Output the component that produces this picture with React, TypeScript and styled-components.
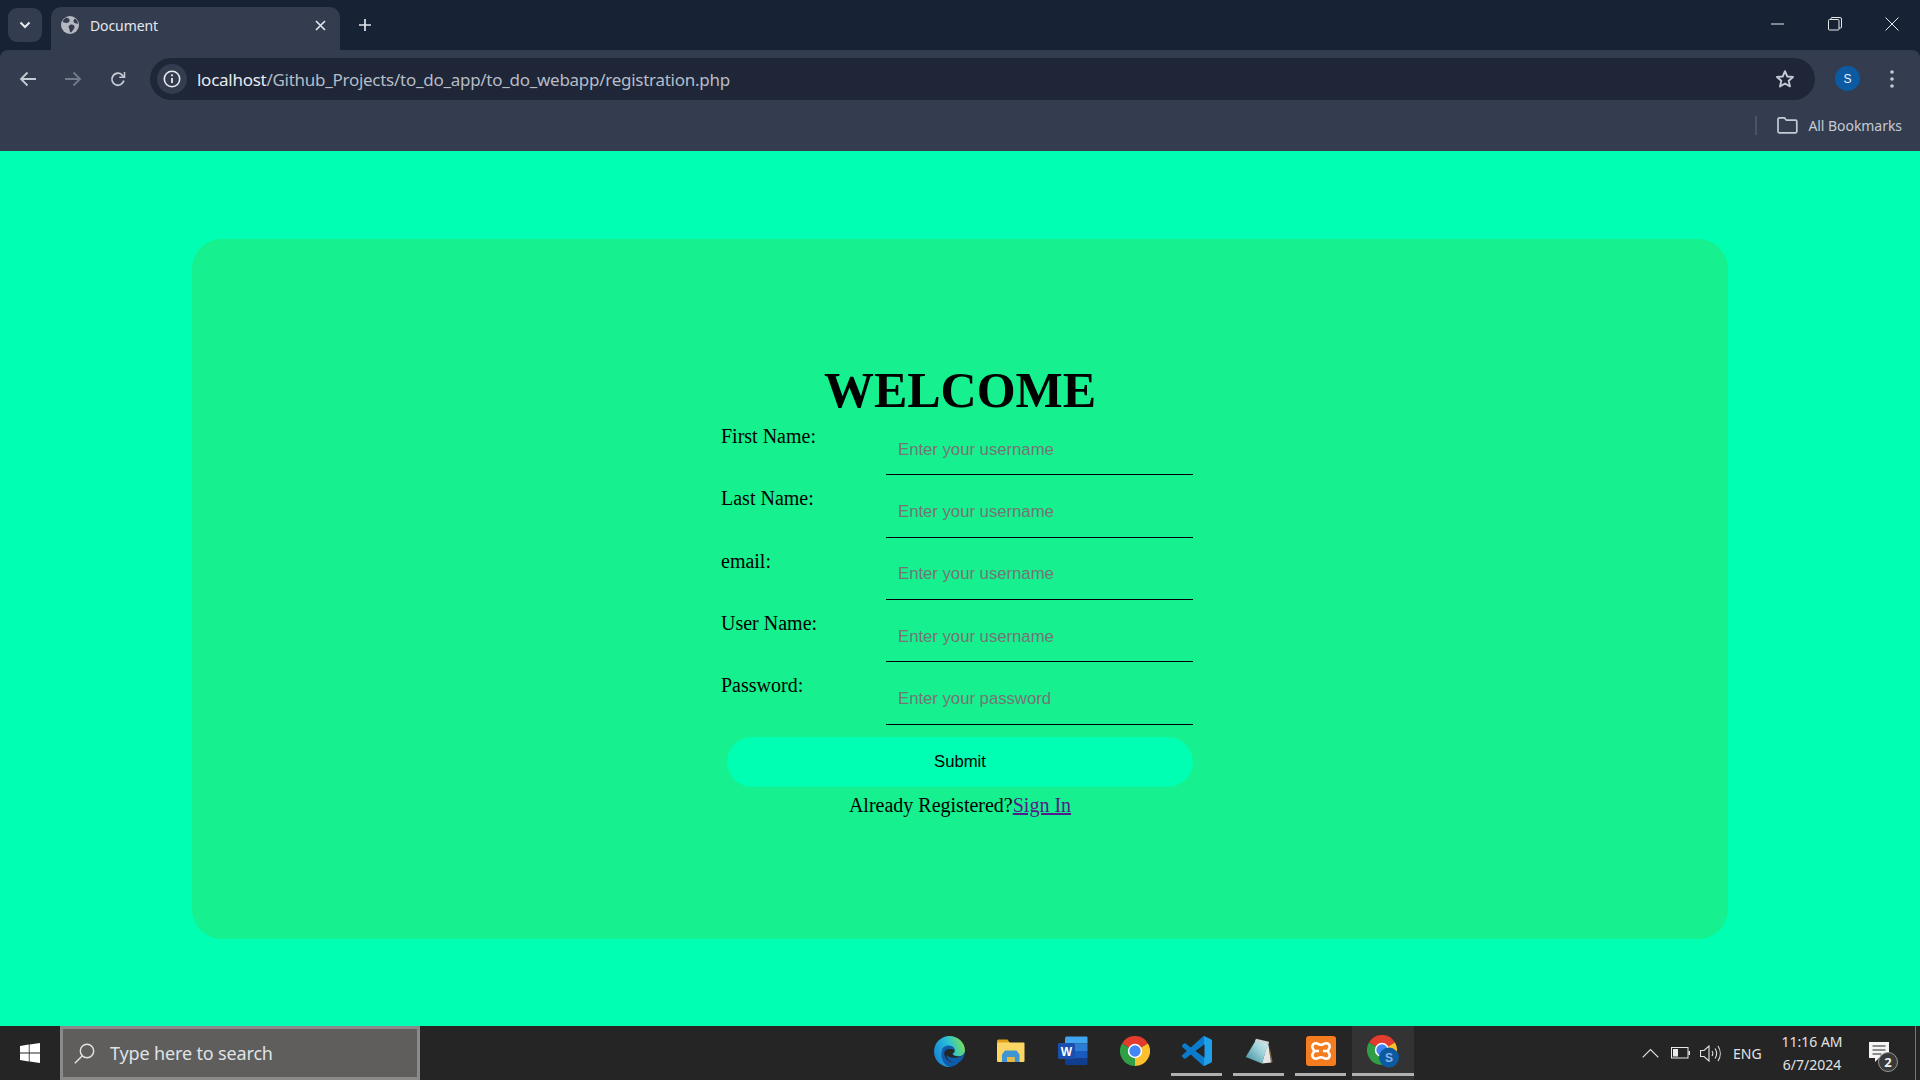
import React from 'react';
import styled, {createGlobalStyle} from 'styled-components';

const GlobalStyle = createGlobalStyle`
	html, body { margin:0; padding:0; height:100%; overflow:hidden; }
	#root { height:100%; }
	* { box-sizing:border-box; }
`;

const Screen = styled.div`
	width:1920px;
	height:1080px;
	display:flex;
	flex-flow:column;
	background:#182235;
	font-family:"Liberation Serif", serif;
`;

// browser chrome
const TitleBar = styled.div`
	height:50px;
	background:#182235;
	display:flex;
	align-items:flex-start;
	font-family:"Open Sans", sans-serif;
	color:#e4e7ec;
`;
const TabListButton = styled.div`
	width:34px;
	height:34px;
	margin:8px 9px 0 8px;
	border-radius:9px;
	background:#343d4f;
	display:flex;
	align-items:center;
	justify-content:center;
`;
const Tab = styled.div`
	width:289px;
	height:43px;
	margin-top:7px;
	background:#343d4f;
	border-radius:10px 10px 0 0;
	display:flex;
	align-items:center;
	padding:0 14px 7px 10px;
	font-size:14px;
	letter-spacing:-0.1px;
`;
const TabTitle = styled.span`
	margin-left:11px;
	flex:1;
	font-family:"Noto Sans", sans-serif;
`;
const NewTab = styled.div`
	width:30px;
	height:30px;
	margin:10px 0 0 10px;
	display:flex;
	align-items:center;
	justify-content:center;
`;
const WindowButtons = styled.div`
	margin-left:auto;
	display:flex;
`;
const WindowButton = styled.div`
	width:57px;
	height:48px;
	display:flex;
	align-items:center;
	justify-content:center;
`;
const ToolBar = styled.div`
	height:50px;
	background:#343d4f;
	display:flex;
	align-items:flex-start;
	padding-top:8px;
	border-radius:8px 8px 0 0;
`;
const NavButton = styled.div`
	width:45px;
	height:42px;
	display:flex;
	align-items:center;
	justify-content:center;
`;
const NavGroup = styled.div`
	display:flex;
	width:150px;
	padding-left:5px;
`;
const AddressBar = styled.div`
	width:1665px;
	height:42px;
	border-radius:21px;
	background:#1e2637;
	display:flex;
	align-items:center;
	padding:0 20px 0 7px;
`;
const InfoChip = styled.div`
	width:30px;
	height:30px;
	border-radius:50%;
	background:#343d4f;
	display:flex;
	align-items:center;
	justify-content:center;
`;
const Url = styled.div`
	margin-left:10px;
	flex:1;
	font-family:"Noto Sans", sans-serif;
	font-size:17px;
	letter-spacing:-0.27px;
	color:#b6bcc8;
	b { font-weight:400; color:#e8eaef; }
`;
const Avatar = styled.div`
	width:25px;
	height:25px;
	margin:8px 0 0 20px;
	border-radius:50%;
	background:#0b5aa2;
	color:#e8f0fa;
	font-family:"Liberation Sans", sans-serif;
	font-size:12px;
	display:flex;
	align-items:center;
	justify-content:center;
`;
const Kebab = styled.div`
	margin-left:30px;
	display:flex;
	height:42px;
	align-items:center;
`;
const BookmarkBar = styled.div`
	height:51px;
	background:#343d4f;
	display:flex;
	align-items:center;
	justify-content:flex-end;
	padding:0 18px 0 0;
	font-family:"Noto Sans", sans-serif;
	font-size:14px;
	letter-spacing:-0.05px;
	color:#c5cad4;
`;
const BookmarkDivider = styled.div`
	width:2px;
	height:19px;
	background:#4a5364;
	margin-right:20px;
`;
const BookmarkLabel = styled.span`
	margin-left:10px;
`;

// page
const Page = styled.main`
	flex:1;
	background:#00ffb2;
	display:flex;
	align-items:center;
	justify-content:center;
`;
const Card = styled.section`
	width:1536px;
	height:700px;
	border-radius:30px;
	background:#17f08e;
	display:flex;
	flex-flow:column;
	align-items:center;
	padding-top:128.4px;
`;
const Title = styled.h1`
	margin:0;
	font-size:50px;
	line-height:46px;
	font-weight:700;
	color:#000;
`;
const Form = styled.form`
	width:480px;
	display:flex;
	flex-flow:column;
`;
const Row = styled.div`
	height:62.4px;
	display:grid;
	grid-template-columns:165px 307px;
	padding-left:1px;
`;
const Label = styled.label`
	font-size:20px;
	line-height:23px;
	padding-top:12px;
	color:#000;
`;
const Input = styled.input`
	display:block;
	width:307px;
	height:50.4px;
	margin-top:12px;
	padding:0 12px;
	border:none;
	border-bottom:1px solid #000;
	background:transparent;
	outline:none;
	font-family:"Liberation Sans", sans-serif;
	font-size:16.7px;
	&::placeholder { color:#757575; opacity:1; }
`;
const Submit = styled.button`
	width:466px;
	height:50px;
	margin:12.1px auto 0;
	border:none;
	border-radius:25px;
	background:#00ffb2;
	color:#000;
	font-family:"Liberation Sans", sans-serif;
	font-size:16.7px;
`;
const Already = styled.p`
	margin:7px 0 0;
	font-size:20px;
	line-height:23px;
	text-align:center;
	color:#000;
	a { color:#551a8b; text-decoration:underline; }
`;

// taskbar
const TaskBar = styled.footer`
	height:54px;
	background:#252525;
	display:flex;
	color:#e6e6e6;
	font-family:"Open Sans", sans-serif;
`;
const StartButton = styled.div`
	width:60px;
	display:flex;
	align-items:center;
	justify-content:center;
`;
const SearchBox = styled.div`
	width:360px;
	background:#5f5e5c;
	border:3px solid #8a8a8a;
	display:flex;
	align-items:center;
	padding-left:11px;
	color:#dfe3e6;
`;
const SearchText = styled.span`
	margin-left:15px;
	font-family:"Noto Sans", sans-serif;
	font-size:18px;
	letter-spacing:-0.15px;
`;
const TaskList = styled.div`
	margin-left:498px;
	display:flex;
`;
const TaskSlot = styled.div<{$running?:boolean; $active?:boolean}>`
	width:62px;
	height:54px;
	display:flex;
	align-items:center;
	justify-content:center;
	padding-bottom:4px;
	position:relative;
	background:${p => p.$active ? '#333333' : 'transparent'};
	&::after {
		content:"";
		display:${p => p.$running ? 'block' : 'none'};
		position:absolute;
		bottom:4px;
		left:${p => p.$active ? '0' : '5px'};
		right:${p => p.$active ? '0' : '6px'};
		height:3px;
		background:#b0b0b0;
	}
`;
const Tray = styled.div`
	margin-left:auto;
	display:flex;
	align-items:center;
	font-size:14px;
	font-family:"Noto Sans", sans-serif;
	color:#e2e2e2;
`;
const TrayIcon = styled.div`
	width:30px;
	display:flex;
	justify-content:center;
`;
const TrayLang = styled.span`
	margin:0 0 0 8px;
	width:30px;
`;
const Clock = styled.div`
	width:90px;
	margin-left:4px;
	text-align:center;
	line-height:23px;
`;
const Notify = styled.div`
	width:49px;
	height:54px;
	margin:0 4px 0 10px;
	padding:0 0 3px 2px;
	border-right:1px solid #777;
	display:flex;
	align-items:center;
	position:relative;
`;
const NotifyBadge = styled.span`
	position:absolute;
	left:11px;
	top:26px;
	width:20px;
	height:20px;
	border-radius:50%;
	background:#3a3a3a;
	border:1px solid #999;
	color:#f0f0f0;
	font-size:13px;
	font-weight:700;
	line-height:18px;
	text-align:center;
`;

// icons
const Globe = () => (
	<svg width="18" height="18" viewBox="0 0 18 18">
		<circle cx="9" cy="9" r="9" fill="#b4b8c0"/>
		<path d="M5 1.500c2 .5 4 1 3.500 3.500S4.500 7 3 6.500 .800 5 5 1.500zM9 9c2-1 4 0 4.500 1.500S12 14 10.500 16 8.500 13 8 12s-1-2 1-3zM14 2.500c1.500 1 3 3.500 3 5-1 .5-3 0-4-1s-.5-3 1-4z" fill="#343d4f"/>
	</svg>
);
const Chevron = () => (
	<svg width="12" height="8" viewBox="0 0 12 8"><path d="M1.500 1.500 6 6l4.500-4.500" fill="none" stroke="#e6e9ee" strokeWidth="2"/></svg>
);
const Cross = () => (
	<svg width="11" height="11" viewBox="0 0 11 11"><path d="M1 1l9 9M10 1l-9 9" stroke="#dfe3ea" strokeWidth="1.700"/></svg>
);
const Plus = () => (
	<svg width="14" height="14" viewBox="0 0 14 14"><path d="M7 1v12M1 7h12" stroke="#dfe3ea" strokeWidth="1.700"/></svg>
);
const Minimize = () => (
	<svg width="14" height="2" viewBox="0 0 14 2"><path d="M0 1h13" stroke="#e8e8e8" strokeWidth="1"/></svg>
);
const Restore = () => (
	<svg width="14" height="14" viewBox="0 0 14 14" fill="none" stroke="#e8e8e8" strokeWidth="1"><rect x=".5" y="2.500" width="10.500" height="10.500" rx="1"/><path d="M3 2.500V1.500a1 1 0 0 1 1-1h8a1.500 1.500 0 0 1 1.500 1.500v8a1 1 0 0 1-1 1H11"/></svg>
);
const CloseWin = () => (
	<svg width="14" height="14" viewBox="0 0 14 14"><path d="M.5.500l13 13M13.500.500l-13 13" stroke="#e8e8e8" strokeWidth="1"/></svg>
);
const Back = ({color}:{color:string}) => (
	<svg width="18" height="16" viewBox="0 0 18 16" fill="none" stroke={color} strokeWidth="1.800"><path d="M17 8H2.500M8.500 1.500 2 8l6.500 6.500"/></svg>
);
const Forward = ({color}:{color:string}) => (
	<svg width="18" height="16" viewBox="0 0 18 16" fill="none" stroke={color} strokeWidth="1.800"><path d="M1 8h14.500M9.500 1.500 16 8l-6.500 6.500"/></svg>
);
const Reload = () => (
	<svg width="16" height="16" viewBox="0 0 16 16" fill="none" stroke="#c5cad4" strokeWidth="1.800"><path d="M13.800 9.500A6 6 0 1 1 12 3.800L14 6"/><path d="M14.500 1v5.200H9.300" strokeWidth="1.500"/></svg>
);
const Info = () => (
	<svg width="18" height="18" viewBox="0 0 18 18" fill="none"><circle cx="9" cy="9" r="7.700" stroke="#e8eaef" strokeWidth="1.600"/><path d="M9 8v5" stroke="#e8eaef" strokeWidth="1.800"/><circle cx="9" cy="5.300" r="1.100" fill="#e8eaef"/></svg>
);
const Star = () => (
	<svg width="20" height="20" viewBox="0 0 20 20"><path d="M10 2.200l2.300 5.300 5.700.500-4.300 3.800 1.300 5.600L10 14.500l-5 2.900 1.300-5.600L2 8l5.700-.500z" fill="none" stroke="#c5cad4" strokeWidth="1.900" strokeLinejoin="round"/></svg>
);
const Dots = () => (
	<svg width="4" height="18" viewBox="0 0 4 18" fill="#c5cad4"><circle cx="2" cy="2" r="1.800"/><circle cx="2" cy="9" r="1.800"/><circle cx="2" cy="16" r="1.800"/></svg>
);
const Folder = () => (
	<svg width="21" height="17" viewBox="0 0 21 17" fill="none" stroke="#c5cad4" strokeWidth="1.700"><path d="M1 2.200a1.300 1.300 0 0 1 1.300-1.300h5.200l2 2.300h9a1.300 1.300 0 0 1 1.300 1.300v10a1.300 1.300 0 0 1-1.300 1.300H2.300A1.300 1.300 0 0 1 1 14.500z"/></svg>
);
const WindowsLogo = () => (
	<svg width="20" height="20" viewBox="0 0 20 20" fill="#fff"><path d="M0 2.900 8.800 1.600v8H0zM9.600 1.500 20 0v9.600H9.600zM0 10.400h8.800v8L0 17.100zM9.600 10.400H20V20L9.600 18.500z"/></svg>
);
const SearchGlass = () => (
	<svg width="21" height="21" viewBox="0 0 21 21" fill="none" stroke="#e4e4e4" strokeWidth="1.400"><circle cx="13" cy="8" r="6.700"/><path d="M8.300 12.800 .8 20.300"/></svg>
);
const Edge = () => (
	<svg width="31" height="31" viewBox="0 0 31 31">
		<defs>
			<linearGradient id="edgeA" x1="0" y1="0.700" x2="1" y2="0.300">
				<stop offset="0" stopColor="#1a7fd6"/>
				<stop offset="0.55" stopColor="#27bfd9"/>
				<stop offset="1" stopColor="#7be05a"/>
			</linearGradient>
		</defs>
		<path d="M15.500 0C24 0 31 6.500 31 14.500c0 3.500-3 5.800-7 5.800-3 0-5-1-5.500-2.500 2-1 2.500-2.500 2-4.200C19.500 10.500 16 9.500 12.500 11 8.500 13 7 17.500 8.500 22c1.500 4 5 7 9 8.800C8 32 0 25 0 15.500 0 7 7 0 15.500 0z" fill="url(#edgeA)"/>
		<path d="M8 14.500c0-3 4-5.500 8-4.800 3 .5 4.600 2.300 4.500 4.200-2.500-1-7.500-1.500-9.500 1-1.500 2-.5 6 2.500 9 2.500 2.500 6 3 9 2.200l4.500-2C24 28 20 31 15.500 31 9 29.500 6 20 8 14.500z" fill="#0f5cab"/>
		<path d="M31 15.500c0 2.500-1 6-3.500 9-3 2.800-8 2.800-11 1-2.500-1.500-4-4-4-6.500 1.500 1.500 4 2.800 7.500 2.800 5 0 10-2 11-6.300z" fill="#0f5cab"/>
	</svg>
);
const Explorer = () => (
	<svg width="28" height="24" viewBox="0 0 28 24">
		<path d="M0 2a1.500 1.500 0 0 1 1.500-1.500h9L13 4H0z" fill="#e0a21c"/>
		<rect x="0" y="3.500" width="27.500" height="19.500" rx="1" fill="#fbd665"/>
		<path d="M5 23v-7.500L8 11.500h11.500l3 4V23h-5v-5h-7.500v5z" fill="#3f94d1"/>
		<rect x="10" y="18" width="7.500" height="5" fill="#e8b93c"/>
	</svg>
);
const Word = () => (
	<svg width="30" height="30" viewBox="0 0 30 30">
		<path d="M9 .500h19.500a1 1 0 0 1 1 1V7.500H7V2.500A2 2 0 0 1 9 .500z" fill="#41a5ee"/>
		<rect x="7" y="7.500" width="22.500" height="7.500" fill="#2b7cd3"/>
		<rect x="7" y="15" width="22.500" height="7.500" fill="#185abd"/>
		<path d="M7 22.500h22.500v5.500a1 1 0 0 1-1 1H9a2 2 0 0 1-2-2z" fill="#103f91"/>
		<rect x="0" y="7" width="17" height="16" rx="1.500" fill="#1a4fb0"/>
		<text x="8.500" y="19.500" textAnchor="middle" fontFamily="Liberation Sans, sans-serif" fontWeight="700" fontSize="12" fill="#fff">W</text>
	</svg>
);
const Chrome = () => (
	<svg width="30" height="30" viewBox="0 0 30 30">
		<path d="M15 15 2 7.500A15 15 0 0 1 28 7.500z" fill="#e33b2e"/>
		<path d="M15 15 28 7.500A15 15 0 0 1 15 30z" fill="#fbc02d"/>
		<path d="M15 15 15 30A15 15 0 0 1 2 7.500z" fill="#2f9e44"/>
		<circle cx="15" cy="15" r="7.200" fill="#fff"/>
		<circle cx="15" cy="15" r="5.700" fill="#4285f4"/>
	</svg>
);
const VsCode = () => (
	<svg width="30" height="30" viewBox="0 0 24 24">
		<defs>
			<linearGradient id="vsA" x1="0" y1="0" x2="1" y2="0">
				<stop offset="0.730" stopColor="#0a7ccb"/>
				<stop offset="0.730" stopColor="#1f9eea"/>
			</linearGradient>
		</defs>
		<path fill="url(#vsA)" d="M23.150 2.587L18.210.21a1.494 1.494 0 0 0-1.705.29l-9.460 8.630-4.120-3.128a.999.999 0 0 0-1.276.057L.327 7.261A1 1 0 0 0 .326 8.740L3.899 12 .326 15.260a1 1 0 0 0 .001 1.479L1.650 17.940a.999.999 0 0 0 1.276.057l4.120-3.128 9.460 8.630a1.492 1.492 0 0 0 1.704.29l4.942-2.377A1.500 1.500 0 0 0 24 20.060V3.939a1.500 1.500 0 0 0-.850-1.352zm-5.146 14.861L10.826 12l7.178-5.448v10.896z"/>
	</svg>
);
const Notepad = () => (
	<svg width="28" height="27" viewBox="0 0 28 27">
		<defs>
			<linearGradient id="noteA" x1="0" y1="1" x2="1" y2="0">
				<stop offset="0" stopColor="#3a8596"/>
				<stop offset="0.600" stopColor="#9ed4db"/>
				<stop offset="1" stopColor="#d9eef0"/>
			</linearGradient>
		</defs>
		<path d="M24 6l3.500 18-1.500 1z" fill="#8a6f3a"/>
		<path d="M23 4l3 20.500L17 25.500z" fill="#e6e6e6"/>
		<path d="M.7 19 11 2l12 3-6 20.500z" fill="url(#noteA)"/>
		<path d="M11 .7l13 3-.5 2.300L10 3z" fill="#cfd4d6"/>
	</svg>
);
const Xampp = () => (
	<svg width="30" height="30" viewBox="0 0 30 30">
		<rect width="30" height="30" rx="3" fill="#f57c1f"/>
		<path d="M10 7.300C12 7.300 13 8.800 15 8.800S18 7.300 20 7.300C22.500 7.300 23.700 9 23.700 10.800C23.700 12.800 22 13.300 22 15S23.700 17.200 23.700 19.200C23.700 21 22.500 22.700 20 22.700C18 22.700 17 21.200 15 21.200S12 22.700 10 22.700C7.500 22.700 6.300 21 6.300 19.200C6.300 17.200 8 16.700 8 15S6.300 12.800 6.300 10.800C6.300 9 7.500 7.300 10 7.300Z" fill="none" stroke="#fff" strokeWidth="2.600"/>
		<path d="M8 15H13M17 15H22" stroke="#fff" strokeWidth="2.600"/>
	</svg>
);
const ChromeProfile = () => (
	<svg width="33" height="33" viewBox="0 0 33 33">
		<path d="M15 15 2 7.500A15 15 0 0 1 28 7.500z" fill="#e33b2e"/>
		<path d="M15 15 28 7.500A15 15 0 0 1 15 30z" fill="#fbc02d"/>
		<path d="M15 15 15 30A15 15 0 0 1 2 7.500z" fill="#2f9e44"/>
		<circle cx="15" cy="15" r="7.200" fill="#fff"/>
		<circle cx="15" cy="15" r="5.700" fill="#4285f4"/>
		<circle cx="22" cy="22.500" r="10" fill="#0b5aa2"/>
		<text x="22" y="27" textAnchor="middle" fontFamily="Liberation Sans, sans-serif" fontWeight="700" fontSize="12" fill="#8ab4e8">S</text>
	</svg>
);
const TrayChevron = () => (
	<svg width="17" height="10" viewBox="0 0 17 10"><path d="M.7 9.300 8.500 1.500l7.800 7.800" fill="none" stroke="#e2e2e2" strokeWidth="1.200"/></svg>
);
const Battery = () => (
	<svg width="19" height="12" viewBox="0 0 19 12"><rect x=".5" y=".5" width="16.500" height="10.500" fill="none" stroke="#e8e8e8"/><rect x="2" y="2" width="5" height="7.500" fill="#e8e8e8"/><rect x="17.500" y="4" width="1.500" height="4" fill="#e8e8e8"/></svg>
);
const Speaker = () => (
	<svg width="21" height="17" viewBox="0 0 21 17" fill="none" stroke="#e2e2e2" strokeWidth="1.100"><path d="M.5 5.500h3.500L9 1v15L4 11.500H.5z"/><path d="M12 6c1 1.500 1 3.500 0 5M15 3.500c2 3 2 7 0 10M18 1c3 4.500 3 10.500 0 15"/></svg>
);
const Bubble = () => (
	<svg width="20" height="20" viewBox="0 0 20 20"><path d="M0 0h20v16H10l-4 4v-4H0z" fill="#f4f4f4"/><path d="M3.500 4h13M3.500 8h13M3.500 12h9" stroke="#252525" strokeWidth="1.200"/></svg>
);

const fields = [
	{label:'First Name:', placeholder:'Enter your username', type:'text'},
	{label:'Last Name:', placeholder:'Enter your username', type:'text'},
	{label:'email:', placeholder:'Enter your username', type:'text'},
	{label:'User Name:', placeholder:'Enter your username', type:'text'},
	{label:'Password:', placeholder:'Enter your password', type:'password'},
];

export default function App(){
	return (
		<Screen>
			<GlobalStyle/>
			<TitleBar>
				<TabListButton><Chevron/></TabListButton>
				<Tab><Globe/><TabTitle>Document</TabTitle><Cross/></Tab>
				<NewTab><Plus/></NewTab>
				<WindowButtons>
					<WindowButton><Minimize/></WindowButton>
					<WindowButton><Restore/></WindowButton>
					<WindowButton><CloseWin/></WindowButton>
				</WindowButtons>
			</TitleBar>
			<ToolBar>
				<NavGroup>
					<NavButton><Back color="#c5cad4"/></NavButton>
					<NavButton><Forward color="#737b8a"/></NavButton>
					<NavButton><Reload/></NavButton>
				</NavGroup>
				<AddressBar>
					<InfoChip><Info/></InfoChip>
					<Url><b>localhost</b>/Github_Projects/to_do_app/to_do_webapp/registration.php</Url>
					<Star/>
				</AddressBar>
				<Avatar>S</Avatar>
				<Kebab><Dots/></Kebab>
			</ToolBar>
			<BookmarkBar>
				<BookmarkDivider/>
				<Folder/>
				<BookmarkLabel>All Bookmarks</BookmarkLabel>
			</BookmarkBar>
			<Page>
				<Card>
					<Title>WELCOME</Title>
					<Form onSubmit={e => e.preventDefault()}>
						{fields.map(f => (
							<Row key={f.label}>
								<Label>{f.label}</Label>
								<Input type={f.type} placeholder={f.placeholder}/>
							</Row>
						))}
						<Submit type="submit">Submit</Submit>
						<Already>Already Registered?<a href="#signin">Sign In</a></Already>
					</Form>
				</Card>
			</Page>
			<TaskBar>
				<StartButton><WindowsLogo/></StartButton>
				<SearchBox><SearchGlass/><SearchText>Type here to search</SearchText></SearchBox>
				<TaskList>
					<TaskSlot><Edge/></TaskSlot>
					<TaskSlot><Explorer/></TaskSlot>
					<TaskSlot><Word/></TaskSlot>
					<TaskSlot><Chrome/></TaskSlot>
					<TaskSlot $running><VsCode/></TaskSlot>
					<TaskSlot $running><Notepad/></TaskSlot>
					<TaskSlot $running><Xampp/></TaskSlot>
					<TaskSlot $running $active><ChromeProfile/></TaskSlot>
				</TaskList>
				<Tray>
					<TrayIcon><TrayChevron/></TrayIcon>
					<TrayIcon><Battery/></TrayIcon>
					<TrayIcon><Speaker/></TrayIcon>
					<TrayLang>ENG</TrayLang>
					<Clock>11:16 AM<br/>6/7/2024</Clock>
					<Notify><Bubble/><NotifyBadge>2</NotifyBadge></Notify>
				</Tray>
			</TaskBar>
		</Screen>
	);
}
